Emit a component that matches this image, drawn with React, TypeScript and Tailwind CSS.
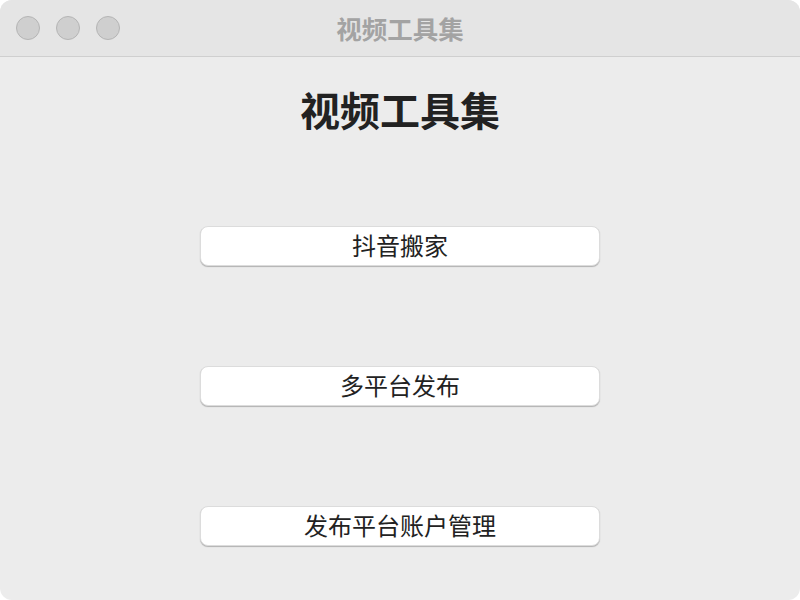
const cjk = {fontFamily: '"Noto Sans CJK SC", "Noto Sans", sans-serif'};

const items = ["抖音搬家", "多平台发布", "发布平台账户管理"];

const App = () => {
    return (
        <div className="w-[800px] h-[600px] bg-white" style={cjk}>
            <div className="flex flex-col w-full h-full bg-[#ececec] rounded-[12px] overflow-hidden">
                {/* title bar */}
                <div className="relative flex items-center h-[57px] bg-[#e5e5e5] border-b border-[#cfcfcf] shrink-0">
                    <div className="flex gap-[16px] pl-[16px]">
                        <span className="w-[24px] h-[24px] rounded-full bg-[#cfcfcf] border border-[#b5b5b5]"/>
                        <span className="w-[24px] h-[24px] rounded-full bg-[#cfcfcf] border border-[#b5b5b5]"/>
                        <span className="w-[24px] h-[24px] rounded-full bg-[#cfcfcf] border border-[#b5b5b5]"/>
                    </div>
                    <div className="absolute inset-0 flex items-center justify-center pointer-events-none">
                        <span className="text-[25.5px] leading-none font-bold text-[#a3a3a3]">视频工具集</span>
                    </div>
                </div>

                <div className="flex flex-col items-center pt-[32px]">
                    <h1 className="text-[40px] leading-none font-bold text-[#222222]">视频工具集</h1>
                    <div className="flex flex-col gap-[100px] mt-[97px]">
                        {items.map(t => (
                            <button
                                key={t}
                                className="w-[400px] h-[40px] pb-[3px] bg-white rounded-[8px] border border-[#dcdcdc] shadow-[0_1px_1px_rgba(0,0,0,0.25)] text-[24px] leading-none text-[#222222] flex items-center justify-center"
                            >
                                {t}
                            </button>
                        ))}
                    </div>
                </div>
            </div>
        </div>
    );
};

export default App;
